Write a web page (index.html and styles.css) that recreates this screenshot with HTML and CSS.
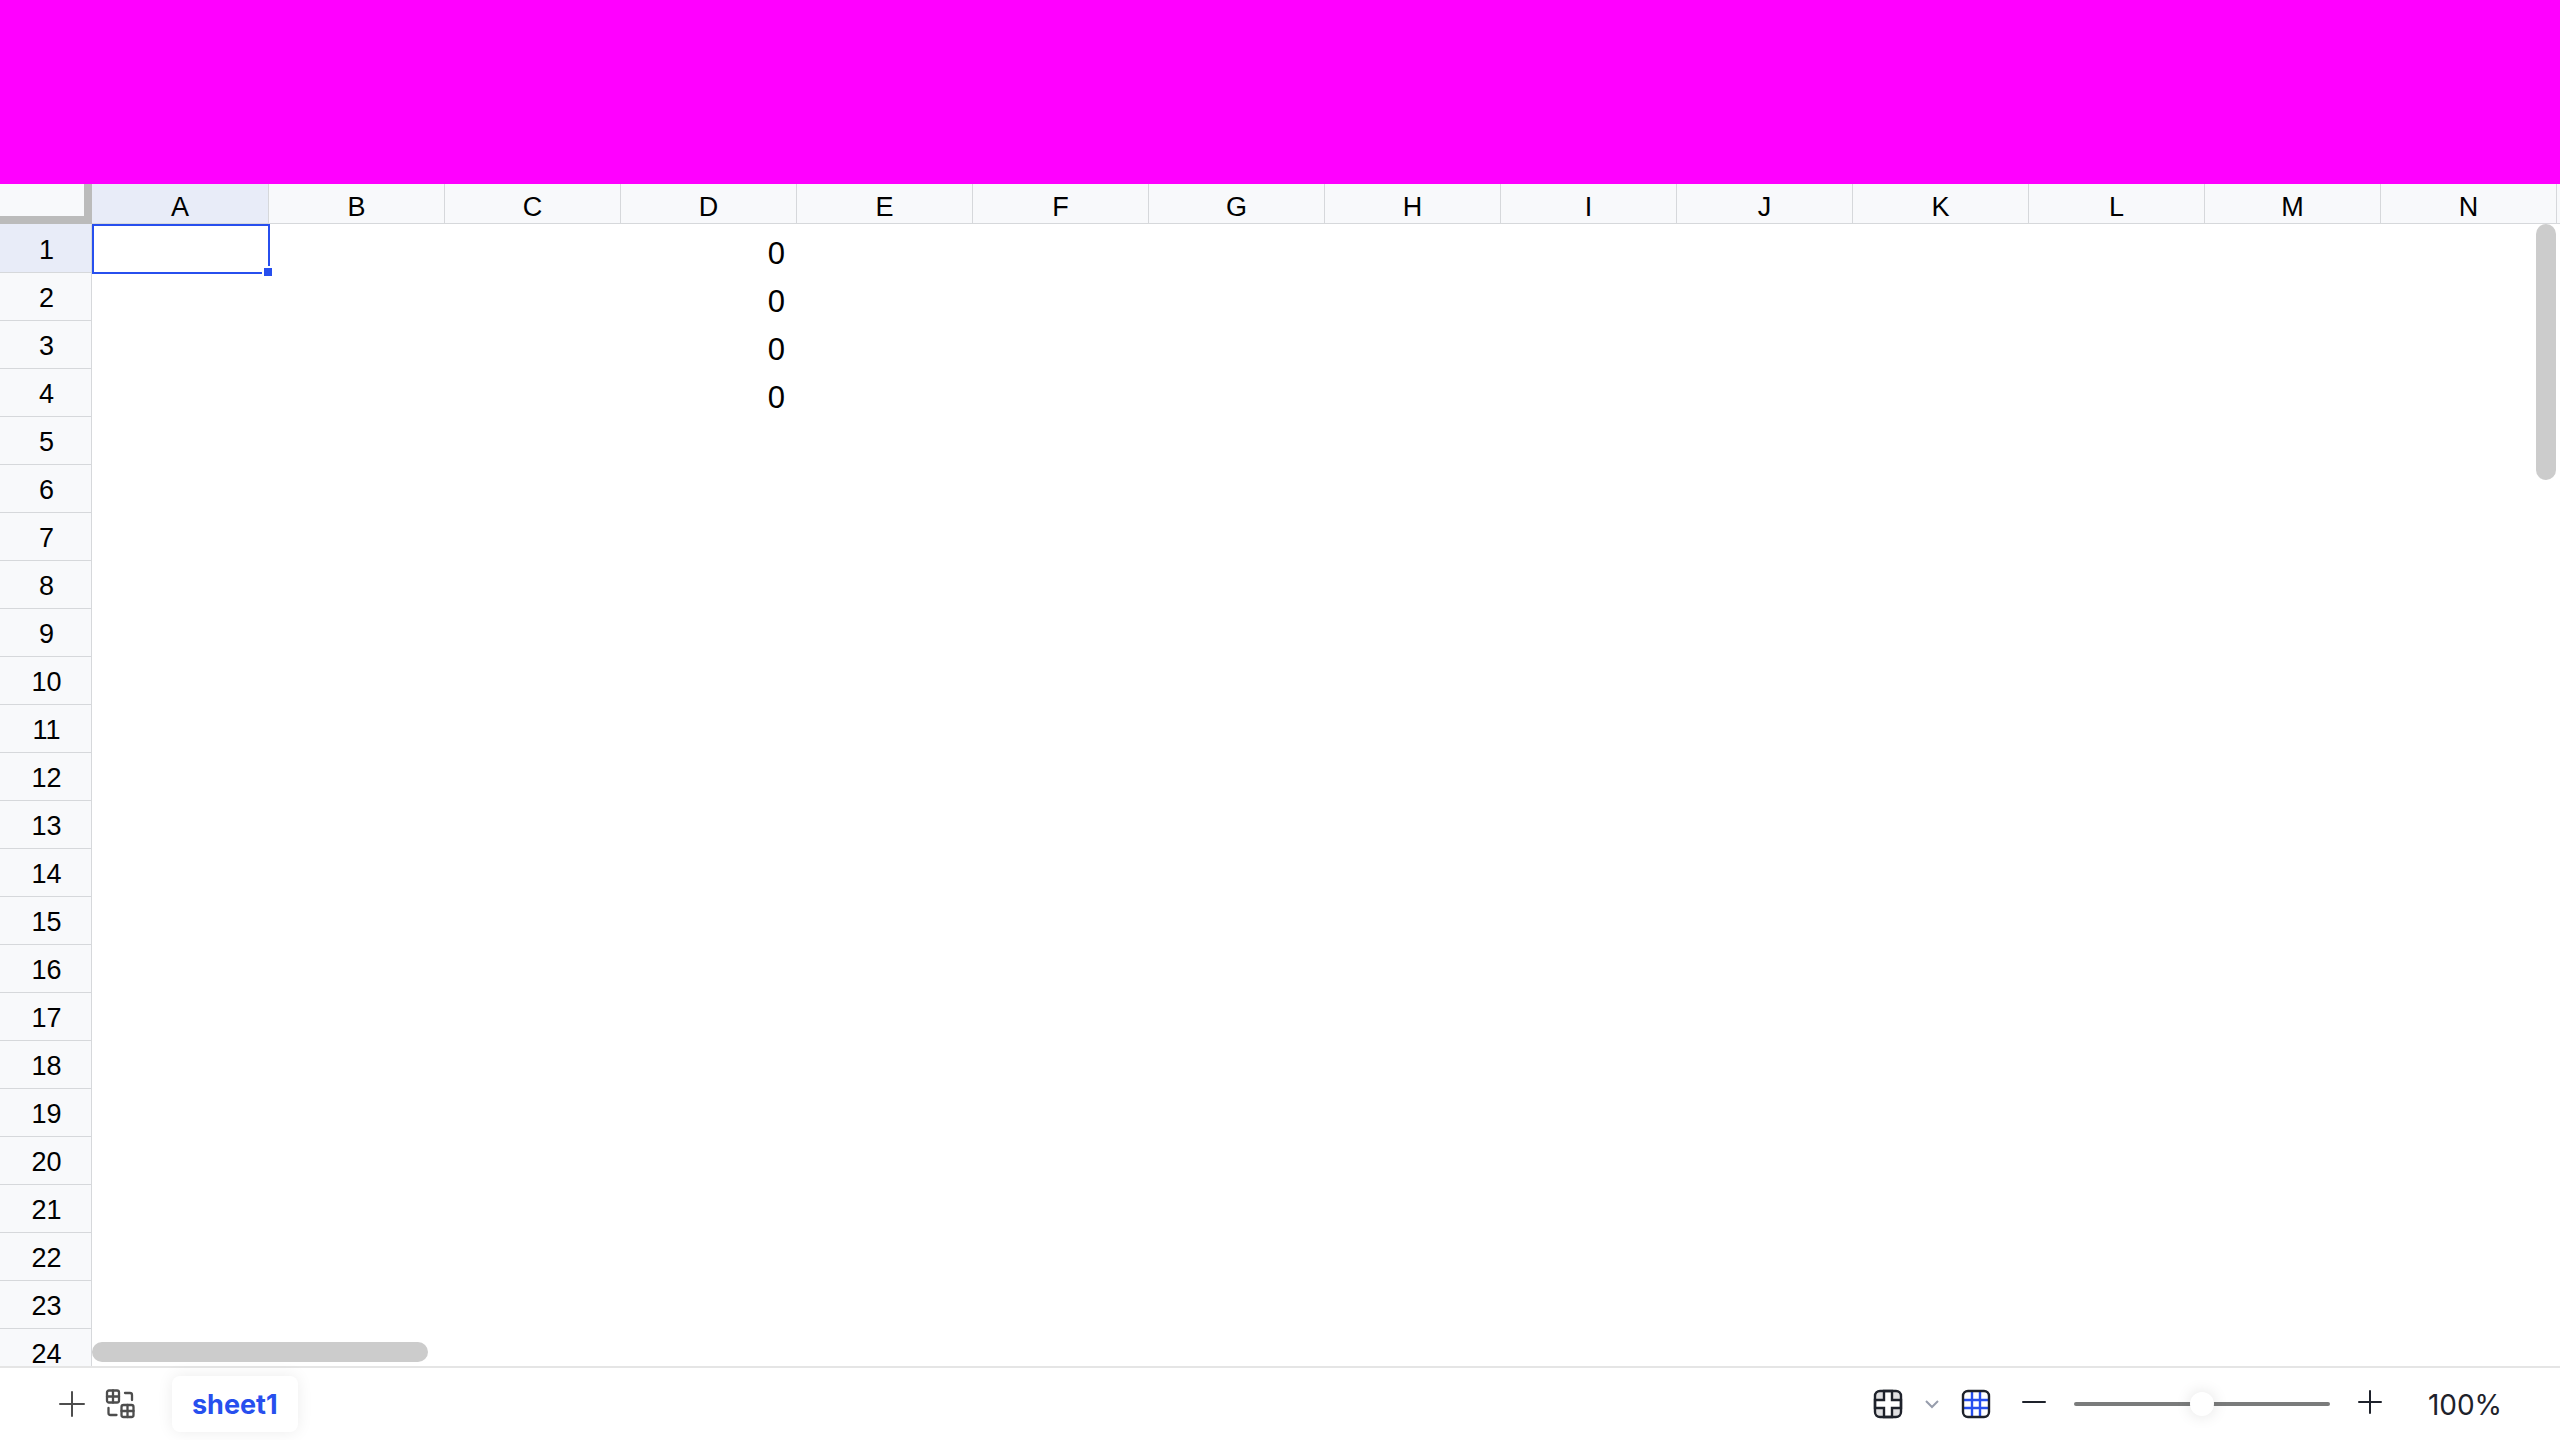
FILE: index.html
```html
<!DOCTYPE html>
<html lang="en">
<head>
<meta charset="utf-8">
<title>Spreadsheet</title>
<link rel="stylesheet" href="styles.css">
</head>
<body>
<div class="app">
  <header class="banner"></header>
  <main class="sheet">
    <table class="grid">
      <thead>
        <tr>
          <th class="corner"></th>
          <th class="col active" scope="col">A</th><th class="col" scope="col">B</th><th class="col" scope="col">C</th><th class="col" scope="col">D</th><th class="col" scope="col">E</th><th class="col" scope="col">F</th><th class="col" scope="col">G</th><th class="col" scope="col">H</th><th class="col" scope="col">I</th><th class="col" scope="col">J</th><th class="col" scope="col">K</th><th class="col" scope="col">L</th><th class="col" scope="col">M</th><th class="col" scope="col">N</th><th class="col" scope="col"></th>
        </tr>
      </thead>
      <tbody>
        <tr><th class="row active" scope="row">1</th><td class="selected"><div class="selection"><span class="fill-handle"></span></div></td><td></td><td></td><td class="number">0</td><td colspan="11"></td></tr>
        <tr><th class="row" scope="row">2</th><td></td><td></td><td></td><td class="number">0</td><td colspan="11"></td></tr>
        <tr><th class="row" scope="row">3</th><td></td><td></td><td></td><td class="number">0</td><td colspan="11"></td></tr>
        <tr><th class="row" scope="row">4</th><td></td><td></td><td></td><td class="number">0</td><td colspan="11"></td></tr>
        <tr><th class="row" scope="row">5</th><td colspan="15"></td></tr>
        <tr><th class="row" scope="row">6</th><td colspan="15"></td></tr>
        <tr><th class="row" scope="row">7</th><td colspan="15"></td></tr>
        <tr><th class="row" scope="row">8</th><td colspan="15"></td></tr>
        <tr><th class="row" scope="row">9</th><td colspan="15"></td></tr>
        <tr><th class="row" scope="row">10</th><td colspan="15"></td></tr>
        <tr><th class="row" scope="row">11</th><td colspan="15"></td></tr>
        <tr><th class="row" scope="row">12</th><td colspan="15"></td></tr>
        <tr><th class="row" scope="row">13</th><td colspan="15"></td></tr>
        <tr><th class="row" scope="row">14</th><td colspan="15"></td></tr>
        <tr><th class="row" scope="row">15</th><td colspan="15"></td></tr>
        <tr><th class="row" scope="row">16</th><td colspan="15"></td></tr>
        <tr><th class="row" scope="row">17</th><td colspan="15"></td></tr>
        <tr><th class="row" scope="row">18</th><td colspan="15"></td></tr>
        <tr><th class="row" scope="row">19</th><td colspan="15"></td></tr>
        <tr><th class="row" scope="row">20</th><td colspan="15"></td></tr>
        <tr><th class="row" scope="row">21</th><td colspan="15"></td></tr>
        <tr><th class="row" scope="row">22</th><td colspan="15"></td></tr>
        <tr><th class="row" scope="row">23</th><td colspan="15"></td></tr>
        <tr><th class="row" scope="row">24</th><td colspan="15"></td></tr>
      </tbody>
    </table>
    <div class="scrollbar vertical"></div>
    <div class="scrollbar horizontal"></div>
  </main>
  <footer class="footer">
    <div class="sheet-tools">
      <button class="icon-button muted" type="button" aria-label="Add sheet">
        <svg width="32" height="32" viewBox="0 0 32 32" fill="none" stroke="currentColor" stroke-width="2" stroke-linecap="round"><path d="M16 4v24M4 16h24"/></svg>
      </button>
      <button class="icon-button muted" type="button" aria-label="All sheets">
        <svg width="32" height="32" viewBox="0 0 32 32" fill="none" stroke="currentColor" stroke-width="2.3" stroke-linecap="round" stroke-linejoin="round"><rect x="3" y="2.5" width="12" height="12" rx="2"/><path d="M9 2.5v12M3 8.500h12"/><rect x="17.5" y="17" width="12" height="12" rx="2"/><path d="M23.5 17v12M17.5 23h12M21 5h5a2 2 0 0 1 2 2v5M4.5 20v5a2 2 0 0 0 2 2h6"/></svg>
      </button>
    </div>
    <button class="tab" type="button">sheet1</button>
    <div class="view-tools">
      <button class="icon-button" type="button" aria-label="Highlight row and column">
        <svg width="32" height="32" viewBox="0 0 32 32" fill="none" stroke="currentColor" stroke-width="2.4"><rect x="3" y="3" width="26" height="26" rx="5" fill="#e0e0e2" stroke="none"/><path d="M12 3h8v9h9v8h-9v9h-8v-9H3v-8h9z" fill="#fff"/><rect x="3" y="3" width="26" height="26" rx="5"/></svg>
      </button>
      <button class="icon-button narrow" type="button" aria-label="Highlight options">
        <svg width="16" height="16" viewBox="0 0 16 16" fill="none" stroke="currentColor" stroke-width="2"><path d="M2 5l6 6 6-6"/></svg>
      </button>
      <button class="icon-button" type="button" aria-label="Gridlines">
        <svg width="32" height="32" viewBox="0 0 32 32" fill="none" stroke-width="2.4"><path d="M12 4v24M20 4v24M4 12h24M4 20h24" stroke="#274fee"/><rect x="3" y="3" width="26" height="26" rx="5" stroke="currentColor"/></svg>
      </button>
    </div>
    <div class="zoom-tools">
      <button class="icon-button" type="button" aria-label="Zoom out">
        <svg width="32" height="32" viewBox="0 0 32 32" fill="none" stroke="currentColor" stroke-width="2" stroke-linecap="round"><path d="M5 14h22"/></svg>
      </button>
      <input class="zoom-slider" type="range" min="0" max="100" value="50" aria-label="Zoom">
      <button class="icon-button" type="button" aria-label="Zoom in">
        <svg width="32" height="32" viewBox="0 0 32 32" fill="none" stroke="currentColor" stroke-width="2" stroke-linecap="round"><path d="M5 14h22M16 3v22"/></svg>
      </button>
      <button class="zoom-value" type="button">100%</button>
    </div>
  </footer>
</div>
</body>
</html>
```
FILE: styles.css
```css
* {
  box-sizing: border-box;
}

body {
  margin: 0;
  background: #fff;
  color: #000;
  font-family: "Liberation Sans", Arial, sans-serif;
}

button {
  margin: 0;
  padding: 0;
  border: 0;
  background: none;
  color: inherit;
  cursor: pointer;
}

.app {
  display: flex;
  flex-direction: column;
  height: 100vh;
}

.banner {
  flex: none;
  height: 184px;
  background: #f0f;
}

.sheet {
  position: relative;
  flex: 1;
  min-height: 0;
  overflow: hidden;
}

.grid {
  width: max-content;
  border-spacing: 0;
}

.grid th {
  background: #f8f9fb;
  font-size: 27px;
  font-weight: 400;
  line-height: 30px;
  text-align: center;
}

.grid td {
  height: 48px;
  padding: 0;
}

.grid .corner {
  width: 92px;
  min-width: 92px;
  padding: 0;
  border: solid #bbb;
  border-width: 0 8px 8px 0;
}

.grid .col {
  width: 176px;
  min-width: 176px;
  height: 40px;
  padding: 6px 0 0;
  border-left: 1px solid #d6d8db;
  border-bottom: 1px solid #d6d8db;
}

.grid .corner + .col {
  border-left: 0;
}

.grid .row {
  height: 48px;
  padding: 3px 0 0 2px;
  border-top: 1px solid #d6d8db;
  border-right: 1px solid #d6d8db;
}

.grid tr:first-child .row {
  border-top-color: #e8ecf8;
}

.grid .active {
  background: #e8ecf8;
}

.grid .number {
  padding: 12px 11px 0 0;
  font-size: 31px;
  line-height: 36px;
  text-align: right;
}

.selected {
  position: relative;
}

.selection {
  position: absolute;
  inset: 0 -2px -2px 0;
  border: 2px solid #274fee;
}

.fill-handle {
  position: absolute;
  right: -6px;
  bottom: -6px;
  width: 12px;
  height: 12px;
  border: 2px solid #fff;
  background: #274fee;
}

.scrollbar {
  position: absolute;
  border-radius: 10px;
  background: #ccc;
}

.scrollbar.vertical {
  top: 40px;
  right: 4px;
  width: 20px;
  height: 256px;
}

.scrollbar.horizontal {
  bottom: 4px;
  left: 92px;
  width: 336px;
  height: 20px;
}

.footer {
  display: flex;
  flex: none;
  align-items: center;
  height: 74px;
  padding: 0 40px 0 52px;
  border-top: 2px solid #e5e5e5;
  color: #1e222b;
  font-family: Inter, sans-serif;
}

.sheet-tools {
  display: flex;
  gap: 8px;
  margin-right: 32px;
}

.icon-button {
  display: flex;
  align-items: center;
  justify-content: center;
  width: 40px;
  height: 40px;
}

.icon-button.muted {
  color: #4d4d4d;
}

.icon-button.narrow {
  width: 24px;
  color: #979dac;
}

.tab {
  height: 56px;
  padding: 2px 20px 0;
  border-radius: 8px;
  background: #fff;
  box-shadow: 0 0 16px rgba(0, 0, 0, 0.08);
  color: #274fee;
  font-family: inherit;
  font-size: 27px;
  font-weight: 700;
  line-height: 32px;
}

.view-tools {
  display: flex;
  gap: 12px;
  margin-left: auto;
  margin-right: 18px;
}

.zoom-tools {
  display: flex;
  align-items: center;
  gap: 20px;
}

.zoom-slider {
  width: 256px;
  height: 24px;
  margin: 0;
  appearance: none;
  background: none;
}

.zoom-slider::-webkit-slider-runnable-track {
  height: 4px;
  border-radius: 2px;
  background: #7a7b7b;
}

.zoom-slider::-webkit-slider-thumb {
  width: 24px;
  height: 24px;
  margin-top: -10px;
  border-radius: 50%;
  appearance: none;
  background: #fff;
  box-shadow: 0 0 16px rgba(0, 0, 0, 0.12);
}

.zoom-value {
  width: 110px;
  padding-top: 2px;
  font-family: inherit;
  font-size: 28px;
  line-height: 40px;
}
```
